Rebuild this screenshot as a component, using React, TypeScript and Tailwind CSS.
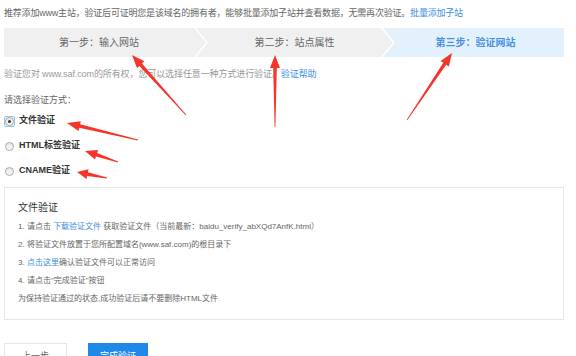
import type { ReactNode } from 'react';

type Pt = [number, number];

// red annotation arrows drawn over the page: [tail, tip]
const arrows: [Pt, Pt][] = [
    [[186, 115], [132, 55]],
    [[275, 127], [275, 55]],
    [[407, 120], [452, 53]],
    [[138, 140], [67, 123]],
    [[118, 162], [85, 151]],
    [[107, 178], [77, 172]],
];

function arrowPoints(tail: Pt, tip: Pt) {
    const dx = tip[0] - tail[0];
    const dy = tip[1] - tail[1];
    const len = Math.hypot(dx, dy);
    const ux = dx / len;
    const uy = dy / len;
    const nx = -uy;
    const ny = ux;
    const headLen = Math.min(13, len * 0.35);
    const bx = tip[0] - ux * headLen;
    const by = tip[1] - uy * headLen;
    const p = (x: number, y: number) => `${x.toFixed(1)},${y.toFixed(1)}`;
    return [
        p(tail[0] + nx * 0.4, tail[1] + ny * 0.4),
        p(bx + nx * 1.8, by + ny * 1.8),
        p(bx + nx * 5, by + ny * 5),
        p(tip[0], tip[1]),
        p(bx - nx * 5, by - ny * 5),
        p(bx - nx * 1.8, by - ny * 1.8),
        p(tail[0] - nx * 0.4, tail[1] - ny * 0.4),
    ].join(' ');
}

function Radio({ checked, children }: { checked?: boolean; children: ReactNode }) {
    return (
        <div className="flex items-center h-[14px]">
            <span className={checked ? 'flex items-center justify-center w-[11px] h-[11px] rounded-[2px] border border-[#9cc3ec] bg-[#eaf3fc]' : 'flex items-center justify-center w-[11px] h-[11px]'}>
                <span className="flex items-center justify-center w-[9px] h-[9px] rounded-full border border-[#a9a9a9] bg-gradient-to-b from-[#e6e6e6] to-[#fbfbfb]">
                    {checked && <span className="w-[3px] h-[3px] rounded-full bg-[#333]" />}
                </span>
            </span>
            <span className="ml-[4px] text-[9px] font-bold text-[#333]">{children}</span>
        </div>
    );
}

function App() {
    return (
        <div className="relative w-[576px] h-[356px] overflow-hidden bg-white font-['Liberation_Sans','Noto_Sans_CJK_SC',sans-serif]">
            <div className="px-[4px] pt-[6px]">
                <p className="text-[9px] leading-[14px] tracking-[-0.2px] text-[#666] whitespace-nowrap">
                    推荐添加www主站，验证后可证明您是该域名的拥有者，能够批量添加子站并查看数据，无需再次验证。
                    <span className="text-[#3b8ee0]">批量添加子站</span>
                </p>

                <div className="mt-[8px] flex h-[29px] w-[560px]">
                    <div className="w-[202px] h-full flex items-center justify-center bg-[#f0f0f0] [clip-path:polygon(0_0,190px_0,202px_50%,190px_100%,0_100%)]">
                        <span className="pr-[12px] text-[10px] text-[#666]">第一步：输入网站</span>
                    </div>
                    <div className="-ml-[10px] w-[197px] h-full flex items-center justify-center bg-[#f0f0f0] [clip-path:polygon(0_0,185px_0,197px_50%,185px_100%,0_100%,12px_50%)]">
                        <span className="text-[10px] text-[#666]">第二步：站点属性</span>
                    </div>
                    <div className="-ml-[10px] flex-1 h-full flex items-center justify-center bg-[#e3f1fd] [clip-path:polygon(0_0,100%_0,100%_100%,0_100%,12px_50%)]">
                        <span className="pl-[4px] text-[10px] font-bold text-[#4a92e0]">第三步：验证网站</span>
                    </div>
                </div>

                <p className="mt-[10px] text-[9px] leading-[14px] tracking-[-0.1px] text-[#999] whitespace-nowrap">
                    验证您对 www.saf.com的所有权，您可以选择任意一种方式进行验证。
                    <span className="text-[#3b8ee0]">验证帮助</span>
                </p>

                <p className="mt-[12px] text-[9px] leading-[14px] text-[#666]">请选择验证方式：</p>

                <div className="mt-[7px] flex flex-col gap-[11px]">
                    <Radio checked>文件验证</Radio>
                    <Radio>HTML标签验证</Radio>
                    <Radio>CNAME验证</Radio>
                </div>

                <div className="mt-[9px] w-[560px] border border-[#e6e6e6] pl-[13px] pt-[13px] pb-[11px]">
                    <p className="text-[10px] leading-[14px] text-[#333]">文件验证</p>
                    <div className="mt-[3px] text-[8px] leading-[18px] text-[#666] whitespace-nowrap">
                        <p>
                            1. 请点击 <span className="text-[#3b8ee0]">下载验证文件</span> 获取验证文件（当前最新：baidu_verify_abXQd7AnfK.html）
                        </p>
                        <p>2. 将验证文件放置于您所配置域名(www.saf.com)的根目录下</p>
                        <p>
                            3. <span className="text-[#3b8ee0]">点击这里</span>确认验证文件可以正常访问
                        </p>
                        <p>4. 请点击"完成验证"按钮</p>
                        <p>为保持验证通过的状态,成功验证后请不要删除HTML文件</p>
                    </div>
                </div>

                <div className="mt-[23px] flex gap-[21px]">
                    <button className="w-[63px] h-[28px] border border-[#e6e6e6] bg-white text-[9px] text-[#666]">上一步</button>
                    <button className="w-[60px] h-[28px] bg-[#2088e8] text-[9px] text-white">完成验证</button>
                </div>
            </div>

            <svg className="absolute inset-0 pointer-events-none" width="576" height="356" viewBox="0 0 576 356">
                {arrows.map(([tail, tip], i) => (
                    <polygon key={i} points={arrowPoints(tail, tip)} fill="#f5342a" />
                ))}
            </svg>
        </div>
    );
}

export default App;
